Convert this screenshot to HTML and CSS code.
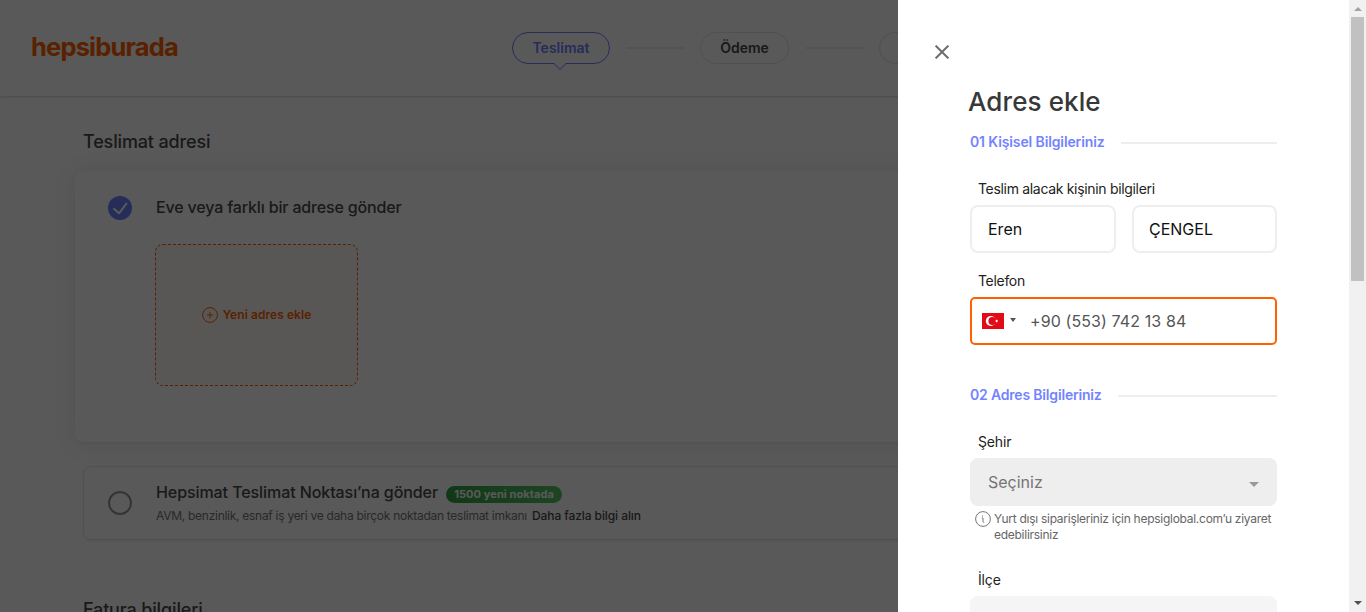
FILE: index.html
```html
<!DOCTYPE html>
<html lang="tr">
<head>
<meta charset="utf-8">
<title>Hepsiburada - Teslimat</title>
<link rel="stylesheet" href="styles.css">
</head>
<body>
<div class="page">
  <header class="header">
    <div class="logo">hepsiburada</div>
    <nav class="steps">
      <span class="step step-active">Teslimat
        <svg class="notch" width="14" height="8" viewBox="0 0 14 8"><path class="notch-fill" d="M1 0H13V1L7 6.5 1 1z"/><path class="notch-line" d="M0 .5H1L7 6.3 13 .5H14"/></svg>
      </span>
      <span class="step-line"></span>
      <span class="step">Ödeme</span>
      <span class="step-line"></span>
      <span class="step step-last"></span>
    </nav>
  </header>
  <main class="content">
    <h2 class="section-title title-delivery">Teslimat adresi</h2>
    <section class="card card-selected">
      <svg class="radio" width="24" height="24" viewBox="0 0 24 24"><circle cx="12" cy="12" r="12" fill="#6f80ff"/><path d="M6 12.8L11 17.3 18.4 7.6" fill="none" stroke="#fff" stroke-width="2" stroke-linecap="round" stroke-linejoin="round"/></svg>
      <div class="card-body">
        <h3 class="card-title send-home">Eve veya farklı bir adrese gönder</h3>
        <div class="add-address">
          <svg width="16" height="16" viewBox="0 0 16 16" fill="none" stroke="#ff6000" stroke-width="1"><circle cx="8" cy="8" r="7.4"/><path d="M8 4.8V11.2M4.8 8H11.2"/></svg>
          <span>Yeni adres ekle</span>
        </div>
      </div>
    </section>
    <section class="card card-option">
      <span class="radio radio-empty"></span>
      <div class="card-body">
        <div class="option-head"><h3 class="card-title send-point">Hepsimat Teslimat Noktası’na gönder</h3><span class="badge">1500 yeni noktada</span></div>
        <p class="option-text"><span class="option-desc">AVM, benzinlik, esnaf iş yeri ve daha birçok noktadan teslimat imkanı</span><b>Daha fazla bilgi alın</b></p>
      </div>
    </section>
    <h2 class="section-title title-billing">Fatura bilgileri</h2>
  </main>
</div>
<div class="backdrop"></div>
<aside class="drawer">
  <div class="panel">
    <svg class="close" width="14" height="14" viewBox="0 0 14 14" fill="none" stroke="#6e6e6e" stroke-width="2"><path d="M.6.6L13.4 13.4M13.4.6L.6 13.4"/></svg>
    <h1 class="panel-title">Adres ekle</h1>
    <div class="group group-person"><span>01 Kişisel Bilgileriniz</span><i></i></div>
    <label class="label label-person">Teslim alacak kişinin bilgileri</label>
    <div class="names">
      <div class="field first-name"><span>Eren</span></div>
      <div class="field last-name"><span>ÇENGEL</span></div>
    </div>
    <label class="label label-phone">Telefon</label>
    <div class="field phone">
      <svg width="22" height="16" viewBox="0 0 22 16"><path fill="#e30a17" d="M0 0H22V16H0z"/><circle cx="8.8" cy="8" r="5" fill="#fff"/><circle cx="10.3" cy="8" r="3.9" fill="#e30a17"/><path fill="#fff" d="M12.6 8L16.2 6.8 14 9.8V6.2L16.2 9.2z"/></svg>
      <svg class="phone-arrow" width="6" height="4" viewBox="0 0 6 4"><path fill="#555" d="M0 0H6L3 4z"/></svg>
      <span class="phone-number">+90 (553) 742 13 84</span>
    </div>
    <div class="group group-address"><span>02 Adres Bilgileriniz</span><i></i></div>
    <label class="label label-city">Şehir</label>
    <div class="select"><span>Seçiniz</span><svg width="10" height="5" viewBox="0 0 10 5"><path fill="#999" d="M0 0H10L5 5z"/></svg></div>
    <div class="hint">
      <svg width="16" height="16" viewBox="0 0 16 16" fill="none" stroke="#777" stroke-width="1"><circle cx="8" cy="8" r="7.4"/><path d="M6.8 7H8V10.5Q8 11.4 9.2 11.4M7.5 4.5V5.6"/></svg>
      <p><span>Yurt dışı siparişleriniz için hepsiglobal.com’u ziyaret</span><br><span>edebilirsiniz</span></p>
    </div>
    <label class="label label-district">İlçe</label>
    <div class="select select-disabled"></div>
  </div>
  <div class="scrollbar">
    <svg width="8" height="4" viewBox="0 0 8 4"><path fill="#a3a3a3" d="M0 4H8L4 0z"/></svg>
    <div class="thumb"></div>
    <svg class="scroll-down" width="8" height="4" viewBox="0 0 8 4"><path fill="#505050" d="M0 0H8L4 4z"/></svg>
  </div>
</aside>
</body>
</html>
```
FILE: styles.css
```css
* { box-sizing: border-box; }
body { margin: 0; width: 1366px; height: 612px; overflow: hidden; position: relative; background: #fff; color: #484848; font-family: Inter, "Liberation Sans", sans-serif; }
h1, h2, h3, p { margin: 0; font-weight: 500; }
svg { display: block; flex: none; }
span, label { white-space: nowrap; }

.page { height: 612px; overflow: hidden; background: #fefefe; }
.header { height: 96px; display: flex; padding: 32px 0 0 31px; background: #fff; box-shadow: 0 1px 2px rgba(0, 0, 0, .16); }
.logo { width: 481px; margin-top: -1px; color: #ff6000; font-size: 25.5px; line-height: 32px; font-weight: 700; letter-spacing: -.83px; }
.steps { display: flex; gap: 16px; align-items: flex-start; }
.step { position: relative; flex: none; width: 89px; height: 32px; border: 1px solid #e5e5e5; border-radius: 16px; text-align: center; font-size: 14px; line-height: 30px; font-weight: 600; }
.step-active { width: 98px; border-color: #6f80ff; color: #6f80ff; }
.step-last { width: 130px; }
.step-line { flex: none; width: 58px; height: 2px; margin: 15px 0; background: #eee; }
.step-line:nth-of-type(4) { margin-left: 1px; margin-right: -1px; }
.notch { position: absolute; left: 40px; top: 30px; }
.notch-fill { fill: #fff; }
.notch-line { fill: none; stroke: #6f80ff; }

.content { padding: 34px 0 0 75px; }
.section-title { padding-left: 8px; font-size: 18px; line-height: 24px; letter-spacing: -.15px; }
.card { display: flex; background: #fff; border-radius: 8px; }
.card-selected { height: 271px; margin-top: 17px; padding: 25px 0 0 33px; box-shadow: 0 2px 24px rgba(0, 0, 0, .09), 0 1px 2px rgba(0, 0, 0, .06); }
.card-option { height: 74px; margin: 24px 0 0 8px; padding: 13px 0 0 24px; border: 1px solid #e8e8e8; box-shadow: 0 1px 3px rgba(0, 0, 0, .07); }
.radio { width: 24px; height: 24px; flex: none; }
.radio-empty { margin-top: 11px; border: 2px solid #969696; border-radius: 50%; }
.card-body { padding-left: 24px; }
.card-title { font-size: 16px; line-height: 24px; white-space: nowrap; }
.send-home { margin-top: -1px; letter-spacing: -.16px; }
.send-point { letter-spacing: -.08px; }
.add-address { width: 203px; height: 142px; margin: 25px 0 0 -1px; display: flex; align-items: center; justify-content: center; gap: 5px; border: 1px dashed #ff6000; border-radius: 8px; background: #fffaf6; color: #ff6000; font-size: 12px; font-weight: 600; letter-spacing: .06px; }
.add-address span { margin-top: -1px; }
.option-head { display: flex; gap: 8px; }
.badge { width: 116px; height: 17px; margin-top: 6px; border-radius: 9px; background: linear-gradient(90deg, #30a143, #58c665); color: #fff; font-size: 11px; line-height: 17px; font-weight: 700; text-align: center; letter-spacing: .08px; }
.option-text { display: flex; gap: 5px; font-size: 12px; line-height: 16px; font-weight: 400; color: #767676; margin-top: 4px; }
.option-desc { letter-spacing: -.275px; }
.option-text b { font-weight: 500; color: #484848; white-space: nowrap; letter-spacing: -.09px; }
.title-billing { margin-top: 58px; }

.backdrop { position: absolute; inset: 0; background: rgba(0, 0, 0, .65); }
.drawer { position: absolute; top: 0; right: 0; width: 468px; height: 612px; display: flex; background: #fff; overflow: hidden; }
.panel { width: 451px; flex: none; padding: 45px 72px 0; }
.close { margin-left: -35px; }
.panel-title { margin: 27px 0 0 -2px; font-size: 26px; line-height: 32px; color: #383838; letter-spacing: .1px; }
.group { display: flex; align-items: center; gap: 16px; height: 20px; color: #7283ff; font-size: 14px; line-height: 20px; font-weight: 600; }
.group i { flex: 1; height: 2px; margin-top: 1px; background: #eee; }
.group-person { margin-top: 14px; letter-spacing: -.12px; }
.group-address { margin-top: 40px; letter-spacing: -.18px; }
.label { display: block; height: 20px; padding-left: 8px; font-size: 14px; line-height: 20px; color: #222; letter-spacing: -.32px; }
.label-city, .label-district { letter-spacing: -.15px; }
.label-person { margin-top: 27px; }
.names { display: grid; grid-template-columns: 146px 145px; gap: 16px; margin-top: 6px; }
.field { height: 48px; display: flex; align-items: center; padding-left: 16px; border: 2px solid #eee; border-radius: 8px; font-size: 16px; color: #111; }
.last-name { padding-left: 15px; }
.label-phone { margin-top: 18px; }
.phone { margin-top: 6px; padding-left: 10px; border-color: #ff6000; border-radius: 5px; }
.phone-arrow { margin: -2px 14px 0 6px; }
.phone-number { color: #555; letter-spacing: .1px; }
.label-city { margin-top: 27px; }
.select { height: 48px; margin-top: 6px; padding: 0 18px; display: flex; align-items: center; justify-content: space-between; border-radius: 8px; background: #eee; color: #757575; font-size: 16px; }
.select svg { margin-top: 4px; }
.hint { display: flex; gap: 3px; padding: 5px 0 0 5px; color: #666; font-size: 12px; line-height: 16px; letter-spacing: -.27px; }
.hint p { font-weight: 400; }
.label-district { margin-top: 27px; }
.select-disabled { background: #f5f5f5; }
.scrollbar { width: 17px; display: flex; flex-direction: column; align-items: center; padding-top: 7px; background: #f1f1f1; }
.thumb { width: 13px; height: 264px; margin-top: 6px; background: #c1c1c1; }
.scroll-down { margin-top: 320px; }
```
